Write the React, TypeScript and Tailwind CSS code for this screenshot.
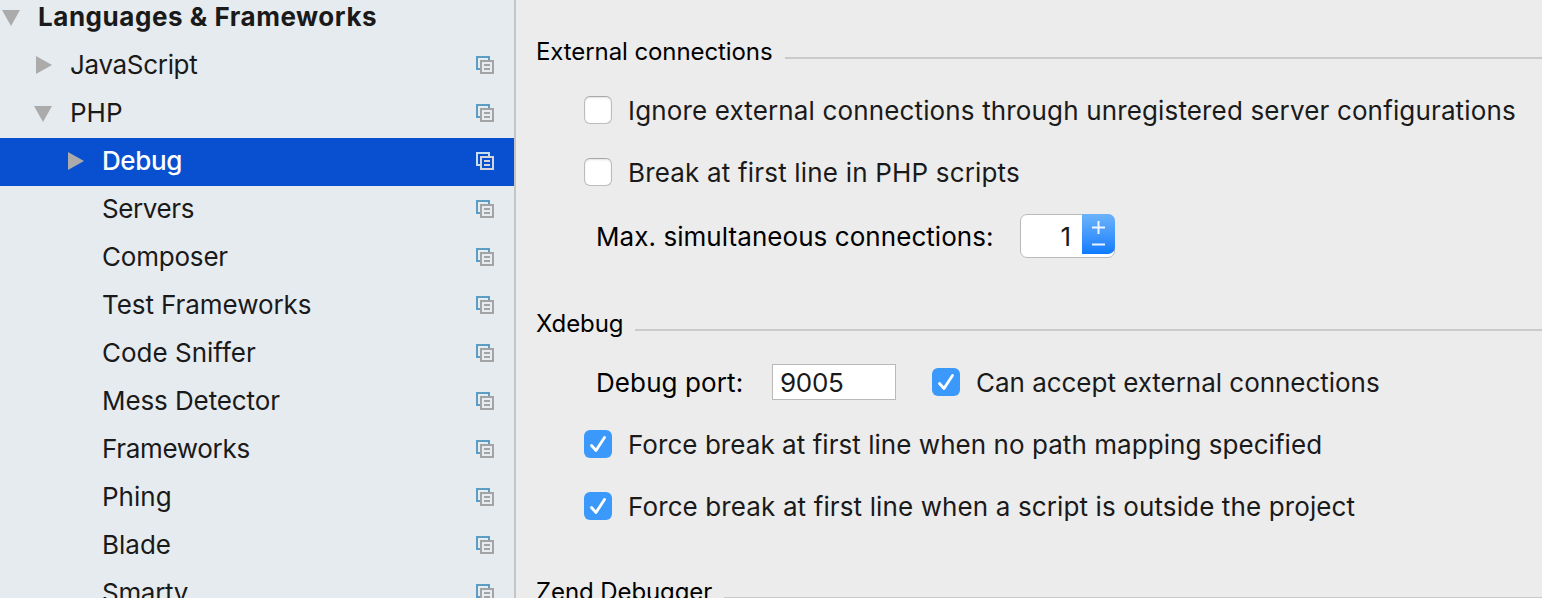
import type { ReactNode } from 'react';

const CopyIcon = ({ active }: { active?: boolean }) => (
  <svg className="mr-[19px] shrink-0" width="20" height="20" viewBox="0 0 20 20" fill="none" strokeWidth="2" shapeRendering="crispEdges">
    <path d="M5 13H2V1h12v3" stroke={active ? '#c3dff0' : '#5b9dc3'} />
    <path d="M6 5h12v12H6zM9 9h6M9 13h6" stroke={active ? '#d5d5d5' : '#a2a4a5'} />
  </svg>
);

const Arrow = ({ open }: { open?: boolean }) => (
  <svg width="18" height="18" viewBox="0 0 18 18" className="shrink-0 overflow-visible">
    <path d={open ? 'M0 1h18L9 17z' : 'M2 -1v18l16-9z'} fill="#ababab" />
  </svg>
);

const Check = ({ on }: { on?: boolean }) => (
  <span
    className={
      on
        ? 'flex size-7 shrink-0 rounded-[6px] bg-[#3b99fc]'
        : 'flex size-7 shrink-0 rounded-[6px] border border-[#bcbcbc] border-t-[#a8a8a8] bg-white shadow-[inset_0_1px_2px_#e2e2e2]'
    }
  >
    {on && (
      <svg width="28" height="28" viewBox="0 0 28 28" fill="none">
        <path d="M7.500 15.500l4.500 5L20.500 7.500" stroke="#fff" strokeWidth="2.800" strokeLinecap="round" strokeLinejoin="round" />
      </svg>
    )}
  </span>
);

const Row = ({ on, spacing, children }: { on?: boolean; spacing: string; children: ReactNode }) => (
  <label className="flex h-[62px] items-center pl-12 text-[#1a1a1a]">
    <Check on={on} />
    <span className={`ml-4 mt-[2px] whitespace-nowrap ${spacing}`}>{children}</span>
  </label>
);

const Heading = ({ children }: { children: ReactNode }) => (
  <div className="flex h-8 items-center text-[24px] leading-8">
    <span className="whitespace-nowrap tracking-[-0.09px]">{children}</span>
    <span className="ml-3 mt-[12px] h-[2px] flex-1 bg-[#c9cbca]" />
  </div>
);

const items = [
  { label: 'Servers', spacing: 'tracking-[-0.4px]' },
  { label: 'Composer', spacing: 'tracking-[-0.2px]' },
  { label: 'Test Frameworks', spacing: 'tracking-[-0.07px]' },
  { label: 'Code Sniffer', spacing: 'tracking-normal' },
  { label: 'Mess Detector', spacing: 'tracking-[-0.1px]' },
  { label: 'Frameworks', spacing: 'tracking-[-0.32px]' },
  { label: 'Phing', spacing: 'tracking-normal' },
  { label: 'Blade', spacing: 'tracking-normal' },
  { label: 'Smarty', spacing: 'tracking-[-0.3px]' },
];

export default function App() {
  return (
    <div className="flex h-[598px] w-full overflow-hidden bg-[#ececec] font-['Inter',sans-serif] text-[26px] leading-[32px] text-black">
      <aside className="w-[514px] shrink-0 overflow-hidden bg-[#e6ebef] text-[#1a1a1a]">
        <div className="-mt-[6px] flex h-12 items-center pl-[2px] font-bold">
          <Arrow open />
          <span className="-mt-[2px] ml-[18px] tracking-[0.54px]">Languages &amp; Frameworks</span>
        </div>
        <div className="flex h-12 items-center pl-[34px]">
          <Arrow />
          <span className="-mt-[2px] ml-[18px] flex-1 tracking-[-0.32px]">JavaScript</span>
          <CopyIcon />
        </div>
        <div className="flex h-12 items-center pl-[34px]">
          <Arrow open />
          <span className="-mt-[2px] ml-[18px] flex-1">PHP</span>
          <CopyIcon />
        </div>
        <div className="flex h-12 items-center bg-[#0850d0] pl-[66px] text-white">
          <Arrow />
          <span className="-mt-[2px] ml-[18px] flex-1 font-medium tracking-[-0.4px]">Debug</span>
          <CopyIcon active />
        </div>
        {items.map(({ label, spacing }) => (
          <div key={label} className="flex h-12 items-center pl-[102px]">
            <span className={`-mt-[2px] flex-1 ${spacing}`}>{label}</span>
            <CopyIcon />
          </div>
        ))}
      </aside>
      <main className="min-w-0 flex-1 border-l-2 border-[#c4c5c7] pl-5 pt-9">
        <Heading>External connections</Heading>
        <div className="mt-[11px]">
          <Row spacing="tracking-[0.145px]">Ignore external connections through unregistered server configurations</Row>
          <Row spacing="tracking-[0.18px]">Break at first line in PHP scripts</Row>
        </div>
        <div className="mt-[11px] flex h-11 items-center pl-[60px]">
          <span className="mt-[2px] w-[424px] tracking-[0.06px]">Max. simultaneous connections:</span>
          <div className="flex h-11 w-[95px] rounded-[7px] border border-[#bababa] bg-white">
            <span className="mt-[6px] flex-1 pr-[11px] text-right text-[#1a1a1a]">1</span>
            <span className="-mr-px -mt-px h-10 w-[33px] rounded-r-[7px] bg-linear-to-b from-[#6bb3fa] to-[#087bff]">
              <svg width="33" height="40" viewBox="0 0 33 40" stroke="#fff" strokeWidth="2" fill="none" opacity=".9">
                <path d="M10 13.500h13M16.500 7v13M10 30.500h13" />
              </svg>
            </span>
          </div>
        </div>
        <div className="mt-[50px]">
          <Heading>Xdebug</Heading>
        </div>
        <div className="mt-6 flex h-9 items-center pl-[60px]">
          <span className="mt-[2px] w-[176px] tracking-[0.1px]">Debug port:</span>
          <div className="mr-9 h-9 w-[124px] border border-[#b9b9b9] bg-white pl-[7px] pt-[2px] tracking-[-0.3px] text-[#1a1a1a]">9005</div>
          <Check on />
          <span className="ml-4 mt-[2px] tracking-[-0.03px] text-[#1a1a1a]">Can accept external connections</span>
        </div>
        <div className="mt-[13px]">
          <Row on spacing="tracking-[0.05px]">Force break at first line when no path mapping specified</Row>
          <Row on spacing="tracking-[0.12px]">Force break at first line when a script is outside the project</Row>
        </div>
        <div className="mt-[39px]">
          <Heading>Zend Debugger</Heading>
        </div>
      </main>
    </div>
  );
}
